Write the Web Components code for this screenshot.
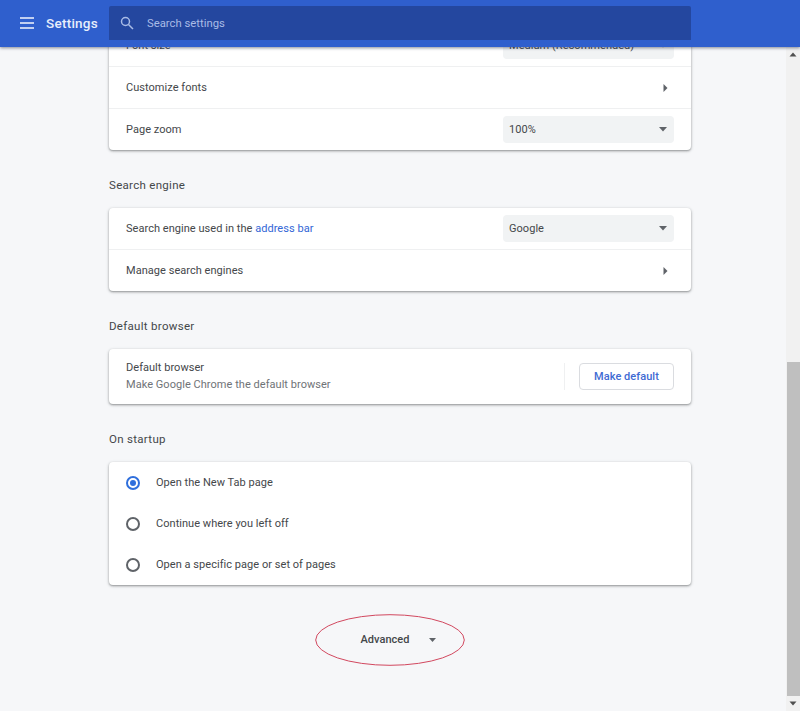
<!DOCTYPE html>
<html><head><meta charset="utf-8"><title>Settings</title>
<style>
html,body{margin:0;height:100%;overflow:hidden}
body{font-family:Roboto,"Liberation Sans",sans-serif;font-size:11px;color:#44474a;background:#f6f7f9}
a{color:#3367d6}
</style></head>
<body>
<settings-app>
  <settings-header slot="header"></settings-header>
  <settings-section heading="" style="margin-top:-22px">
    <settings-row><span>Font size</span><settings-select slot="end">Medium (Recommended)</settings-select></settings-row>
    <settings-row divider><span>Customize fonts</span><settings-arrow slot="end"></settings-arrow></settings-row>
    <settings-row divider><span>Page zoom</span><settings-select slot="end">100%</settings-select></settings-row>
  </settings-section>
  <settings-section heading="Search engine">
    <settings-row><span>Search engine used in the <a>address bar</a></span><settings-select slot="end">Google</settings-select></settings-row>
    <settings-row divider><span>Manage search engines</span><settings-arrow slot="end"></settings-arrow></settings-row>
  </settings-section>
  <settings-section heading="Default browser">
    <settings-default-row></settings-default-row>
  </settings-section>
  <settings-section heading="On startup">
    <settings-radio checked>Open the New Tab page</settings-radio>
    <settings-radio>Continue where you left off</settings-radio>
    <settings-radio>Open a specific page or set of pages</settings-radio>
  </settings-section>
  <settings-advanced></settings-advanced>
</settings-app>
<script>
function def(name, css, html){
  customElements.define(name, class extends HTMLElement{
    constructor(){super();const r=this.attachShadow({mode:'open'});
      r.innerHTML='<style>'+css+'</style>'+(typeof html==='function'?html(this):html);}
  });
}
def('settings-app',`
:host{display:flex;flex-direction:column;height:711px;overflow:hidden}
.body{flex:1;display:flex;min-height:0}
.scroll{flex:1;min-width:0;overflow:hidden;display:flex;flex-direction:column;align-items:center}
.col{width:582px;margin-left:14px;display:flex;flex-direction:column;flex:none}
.top{position:relative;z-index:2}
.bar{width:14px;flex:none;display:flex;flex-direction:column;background:#f1f1f1}
.bar .btn{height:15px;flex:none;display:flex;align-items:center;justify-content:center}
.track{flex:1;display:flex;flex-direction:column;justify-content:flex-end}
.thumb{height:334px;background:#bfbfbf;margin-left:1px}
`,`<div class="top"><slot name="header"></slot></div>
<div class="body"><div class="scroll"><div class="col"><slot></slot></div></div>
<div class="bar"><div class="btn"><svg width="8" height="5" viewBox="0 0 8 5"><path d="M4 0.5 7.5 4.5H.5z" fill="#505050"/></svg></div>
<div class="track"><div class="thumb"></div></div>
<div class="btn"><svg width="8" height="5" viewBox="0 0 8 5"><path d="M4 4.5 7.5 .5H.5z" fill="#505050"/></svg></div></div></div>`);

def('settings-header',`
:host{display:flex;align-items:flex-start;height:47px;background:#2f5fcd;box-shadow:0 1px 3px rgba(40,50,70,.55);color:#fff;position:relative}
.lead{width:109px;flex:none;display:flex;align-items:center;height:46px;box-sizing:border-box;padding-left:20px;gap:12px}
.title{font-size:13.5px;font-weight:500;color:#e8eefb;letter-spacing:.25px}
.search{flex:none;width:582px;height:34px;margin-top:6px;background:#24479f;border-radius:2px 2px 0 0;display:flex;align-items:center;box-sizing:border-box;padding-left:11px;gap:13px;font-size:11.3px;color:#a9bce6}
`,`<div class="lead"><svg width="14" height="12" viewBox="0 0 14 12"><path d="M0 1h14M0 6h14M0 11h14" stroke="#f2f5fd" stroke-width="1.6"/></svg><span class="title">Settings</span></div>
<div class="search"><svg width="14" height="14" viewBox="0 0 14 14" fill="none" stroke="#a9bce6" stroke-width="1.5"><circle cx="5.5" cy="5.5" r="4"/><path d="M8.5 8.5 13 13"/></svg><span>Search settings</span></div>`);

def('settings-section',`
:host{display:flex;flex-direction:column}
h2{margin:0;height:58px;box-sizing:border-box;padding-top:26.5px;font:400 11.5px/16px Roboto,sans-serif;color:#44474a;letter-spacing:.3px}
.card{background:#fff;border-radius:4px;box-shadow:0 1px 2px rgba(60,64,67,.45),0 1px 3px 1px rgba(60,64,67,.12);display:flex;flex-direction:column}
`,el=>{const h=el.getAttribute('heading');return (h?`<h2>${h}</h2>`:'')+'<div class="card"><slot></slot></div>';});

def('settings-row',`
:host{display:flex;align-items:center;justify-content:space-between;height:41px;box-sizing:border-box;padding:0 17px}
:host([divider]){height:42px;border-top:1px solid #eff0f1}
::slotted(span){letter-spacing:.04px}
`,`<slot></slot><slot name="end"></slot>`);

def('settings-select',`
:host{display:flex;align-items:center;justify-content:space-between;width:171px;height:27px;box-sizing:border-box;padding:0 7px 0 6px;background:#f1f3f4;border-radius:4px;letter-spacing:.04px}
`,`<span><slot></slot></span><svg width="8" height="5" viewBox="0 0 8 5"><path d="M0 0h8L4 4.5z" fill="#5f6368"/></svg>`);

def('settings-arrow',`
:host{display:flex;width:5px;margin-right:6px}
`,`<svg width="5" height="8" viewBox="0 0 5 8"><path d="M.5 0 4.5 4 .5 8z" fill="#5f6368"/></svg>`);

def('settings-default-row',`
:host{display:flex;align-items:center;height:55px;box-sizing:border-box;padding:0 17px;letter-spacing:.04px}
.text{flex:1;display:flex;flex-direction:column;gap:1px;line-height:16px}
.sub{color:#6f7377}
.sep{width:1px;height:27px;background:#eff0f1;margin-right:14px}
button{width:95px;height:27px;box-sizing:border-box;background:#fff;border:1px solid #dadce0;border-radius:4px;font:500 11px Roboto,sans-serif;color:#3f6bd3;padding:0;letter-spacing:.04px}
`,`<div class="text"><span>Default browser</span><span class="sub">Make Google Chrome the default browser</span></div><div class="sep"></div><button>Make default</button>`);

def('settings-radio',`
:host{display:flex;align-items:center;height:41px;padding-left:17px;gap:16px;letter-spacing:.04px}
.r{width:14px;height:14px;box-sizing:border-box;border:2px solid #5f6368;border-radius:50%;display:flex;align-items:center;justify-content:center;flex:none}
:host([checked]) .r{border-color:#2f6fdc}
:host([checked]) .r i{display:block;width:6px;height:6px;border-radius:50%;background:#2f6fdc}
`,`<span class="r"><i></i></span><span><slot></slot></span>`);

def('settings-advanced',`
:host{display:flex;justify-content:center;position:relative;height:52px;margin-top:29px;align-items:center;box-sizing:border-box}
.t{font:500 11px Roboto,sans-serif;color:#44474a;letter-spacing:.04px}
svg.a{margin-left:19px}
svg.o{position:absolute;left:206px;top:0;overflow:visible}
.in{display:flex;align-items:center;margin:0 4px 1px 0}
`,`<div class="in"><span class="t">Advanced</span><svg class="a" width="7" height="4" viewBox="0 0 7 4"><path d="M0 0h7L3.5 4z" fill="#5f6368"/></svg></div>
<svg class="o" width="150" height="52" viewBox="0 0 150 52"><ellipse cx="75" cy="26" rx="74.3" ry="25.3" fill="none" stroke="#d2485f" stroke-width="1"/></svg>`);
</script>
</body></html>
